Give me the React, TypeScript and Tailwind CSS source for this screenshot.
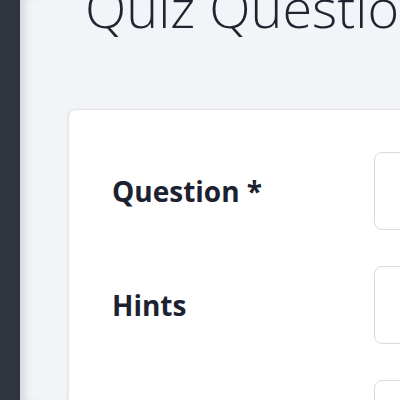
export default function App() {
  const rows = ["Question *", "Hints", "Answer"];
  return (
    <div
      className="flex h-[400px] w-[400px] overflow-hidden bg-[#f2f4f7]"
      style={{ fontFamily: '"Open Sans", "Noto Sans", sans-serif' }}
    >
      <aside className="w-[20px] shrink-0 bg-[#2f343e]" />
      <main className="flex-1 overflow-hidden pl-[48px] shadow-[inset_10px_0_10px_-6px_rgba(0,0,0,0.14)]">
        <h1 className="-mt-[20px] ml-[17px] whitespace-nowrap text-[54px] font-light leading-none text-[#1f2430]">
          Quiz Question
        </h1>
        <div className="mt-[75px] w-[400px] rounded-lg border border-[#e3e6eb] bg-white pl-[43px] pt-[42px] shadow-sm">
          <div className="grid grid-cols-[230px_1fr] gap-x-[32px] gap-y-[36px]">
            {rows.map((r) => (
              <div key={r} className="contents">
                <label className="flex items-center whitespace-nowrap text-[28px] font-bold text-[#1c2230]">
                  {r}
                </label>
                <div className="h-[78px] rounded-lg border border-[#d6dbe2] bg-white" />
              </div>
            ))}
          </div>
        </div>
      </main>
    </div>
  );
}
